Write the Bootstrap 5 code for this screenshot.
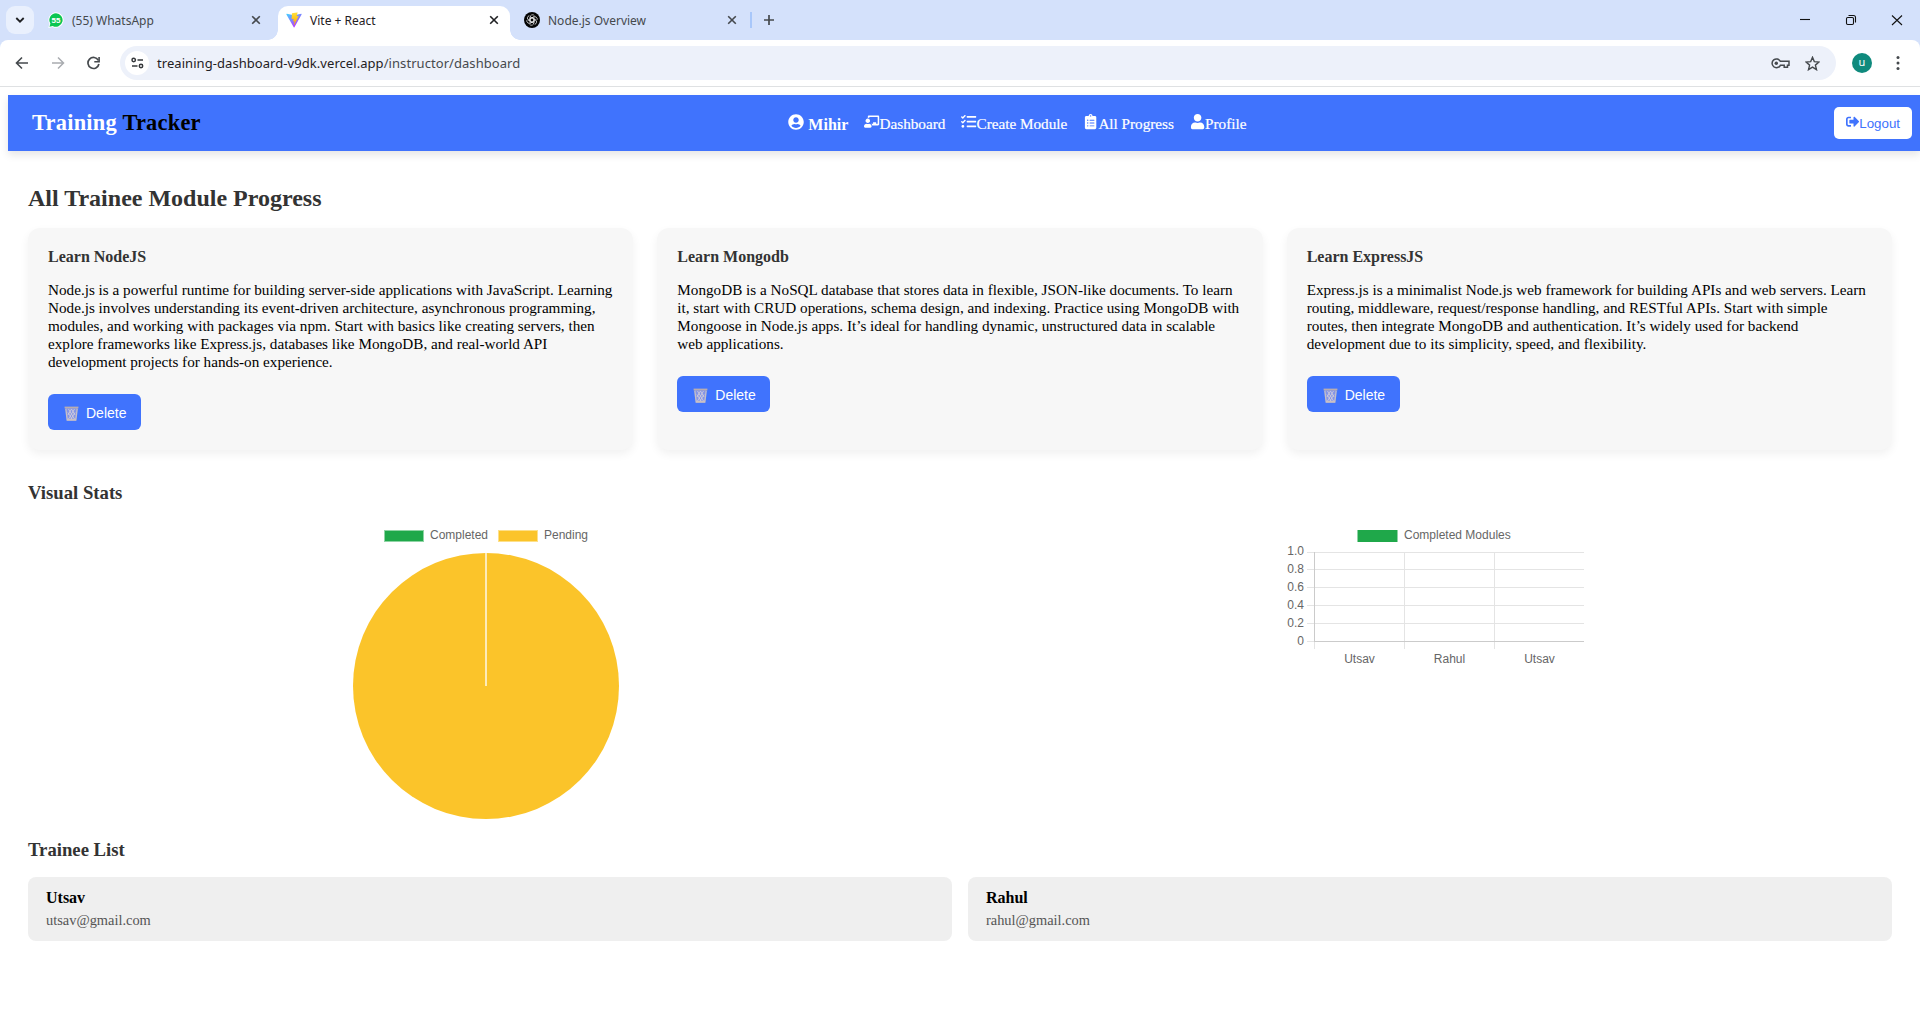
<!DOCTYPE html>
<html lang="en">
<head>
<meta charset="utf-8">
<title>Vite + React</title>
<link href="https://cdn.jsdelivr.net/npm/bootstrap@5.3.0/dist/css/bootstrap.min.css" rel="stylesheet">
<style>
body{margin:0;background:#fff;color:#000;font-family:"Liberation Serif",serif;font-size:16px;line-height:18px;height:1032px;overflow:hidden}
svg{display:block;flex:none}
/* browser frame */
.frame-font{font-family:"Noto Sans","Open Sans",sans-serif}
.strip{height:40px;background:#d4e1fb;padding:6px 0 0 6px}
.tabsearch{width:28px;height:28px;border-radius:9px;background:#e9f0fd}
.tab{height:34px;padding-bottom:6px;font-size:12px;color:#45494d}
.tab span{padding-top:1px}
.tab-a{width:244px;padding-left:14px;padding-right:17px}
.tab-b{width:232px;padding-left:8px;padding-right:11px;background:#fff;border-radius:10px 10px 0 0;color:#1f2023;position:relative}
.tab-b::before,.tab-b::after{content:"";position:absolute;bottom:0;width:10px;height:10px}
.tab-b::before{left:-10px;background:radial-gradient(circle at 0 0,transparent 9.5px,#fff 10px)}
.tab-b::after{right:-10px;background:radial-gradient(circle at 100% 0,transparent 9.5px,#fff 10px)}
.tab-c{width:240px;padding-left:14px;padding-right:13px}
.tabline{width:2px;height:16px;background:#a8c7fa;margin-top:6px}
.plus{margin:8px 0 0 11px}
.toolbar-wrap{background:#d4e1fb}
.toolbar{height:47px;background:#fff;border-bottom:1px solid #dfe1e3;border-radius:8px 8px 0 0;padding:5px 15px 5px 15px}
.fwd{margin-left:22px}
.reload{margin-left:21px}
.omni{height:34px;border-radius:17px;background:#edf1fa;margin-left:19px;width:1716px;padding:0 16px 0 5px;font-size:13px;color:#1f2023}
.url{margin-left:8px;letter-spacing:.06px}
.url span{color:#46494d}
.star{margin-left:15px}
.dots{margin-left:24px}
.site{width:24px;height:24px;border-radius:50%;background:#fff}
.avatar{width:20px;height:20px;border-radius:50%;background:#0f8a7d;color:#fff;font-size:11px;line-height:18px;margin-left:16px}
/* application bar */
.appbar{margin:8px 0 0 8px;height:56px;padding:0 8px 0 24px;background:#4073fd;box-shadow:0 4px 8px rgba(0,0,0,.1);color:#fff}
.brand{font-size:22.4px;font-weight:700;line-height:26px;letter-spacing:.25px}
.brand span{color:#000}
.menu{font-size:15.2px;padding-top:1px}
.menu svg{display:inline;vertical-align:baseline;width:15.2px;height:15.2px}
.menu b svg{width:16px;height:16px}
.menu b{font-size:16px}
.menu a{color:#fff;text-decoration:none;-webkit-text-stroke:.2px #fff}
.logout{height:32px;width:78px;border:0;border-radius:5px;background:#fff;color:#4073fd;font:13.33px/15px "Liberation Sans",sans-serif}
.logout svg{margin-bottom:3px}
/* page */
.page-body{padding:33px 28px 0}
h1{font-size:24px;font-weight:700;line-height:28px;color:#333;margin:0 0 16px}
h2{font-size:18.72px;font-weight:700;line-height:22px;color:#333;margin:0}
.stats-title{margin-top:32px}
.list-title{margin-top:18px}
.modules{gap:24px}
.module{flex:1 1 0;height:222px;background:#f7f7f7;border-radius:12px;padding:20px;box-shadow:0 4px 10px rgba(0,0,0,.06)}
.module h3{font-size:16px;line-height:18px;font-weight:700;color:#333;margin:0 0 15px}
.module p{font-size:15.2px;line-height:18px;margin:0 0 23px;white-space:nowrap}
.del{height:36px;width:93px;border:0;border-radius:6px;background:#4073fd;color:#fff;font:14px/16px "Liberation Sans",sans-serif;padding:2px 0 0 16px}
.del span{margin-left:7px}
.charts{gap:32px;margin-top:17px}
.charts>div{flex:1 1 0}
.charts text{font:12px "Liberation Sans",sans-serif;fill:#666}
.people{gap:16px;margin-top:16px}
.person{flex:1 1 0;height:64px;border-radius:8px;background:#efefef;padding:12px 18px}
.person b{font-size:16px;line-height:18px}
.person span{font-size:14.4px;line-height:17px;color:#555;margin-top:5px}
</style>
</head>
<body>
<svg width="0" height="0" class="position-absolute">
  <symbol id="x" viewBox="0 0 10 10"><path d="M1.2 1.2 8.8 8.8M8.8 1.2 1.2 8.8" stroke="currentColor" stroke-width="1.6" fill="none"/></symbol>
  <symbol id="bin" viewBox="0 0 15 15"><path d="M2 2h11l-1.200 12H3.200z" fill="#8494e6"/><path d="M1.800 2.500 3.200 14h8.600l1.400-11.500" fill="none" stroke="#c6bfc6" stroke-width="1.400"/><path d="m4.500 3 6 10M7.500 3l3.500 6M10.500 3l-6 10M7.500 3 4 9M4 6.500 8 13M11 6.500 7 13" fill="none" stroke="#d7d0da" stroke-width=".8"/><path d="M.6 1.500h13.800" stroke="#b9adb0" stroke-width="1.800"/><path d="M3 13.600h9" stroke="#c9c0c4" stroke-width="1.600"/></symbol>
</svg>

<div class="frame-font">
  <div class="strip d-flex">
    <div class="tabsearch d-flex align-items-center justify-content-center"><svg width="10" height="10" viewBox="0 0 10 10"><path d="m1.300 3 3.700 3.700L8.700 3" fill="none" stroke="#1f2023" stroke-width="1.800"/></svg></div>
    <div class="tab tab-a d-flex align-items-center">
      <svg width="16" height="16" viewBox="0 0 16 16"><path d="M8 .3A7.700 7.700 0 1 1 4.500 14.900L.3 15.900l1.200-4A7.700 7.700 0 0 1 8 .3z" fill="#fff"/><path d="M8 1.300A6.700 6.700 0 1 1 4.700 13.900L1.500 14.700l.9-3.100A6.700 6.700 0 0 1 8 1.300z" fill="#0bc651"/><text x="8" y="10.900" font-family="Liberation Sans" font-size="8" font-weight="700" fill="#fff" text-anchor="middle">55</text></svg>
      <span class="ms-2 flex-grow-1">(55) WhatsApp</span><svg width="10" height="10"><use href="#x"/></svg>
    </div>
    <div class="tab tab-b d-flex align-items-center">
      <svg width="16" height="16" viewBox="0 0 410 404"><defs><linearGradient id="va" x1="0" y1="0" x2=".6" y2="1"><stop stop-color="#41d1ff"/><stop offset="1" stop-color="#bd34fe"/></linearGradient><linearGradient id="vb" x1="0" y1="0" x2="0" y2="1"><stop stop-color="#ffea83"/><stop offset=".1" stop-color="#ffdd35"/><stop offset="1" stop-color="#ffa800"/></linearGradient></defs><path fill="url(#va)" d="M399.600 59.500 215.600 388.500c-3.800 6.800-13.500 6.900-17.400.1L10.600 59.600c-4.200-7.400 2.100-16.400 10.500-14.900l184.200 32.900c1.200.2 2.400.2 3.500 0l180.300-32.800c8.400-1.600 14.700 7.300 10.500 14.700z"/><path fill="url(#vb)" d="M293 1.600 156.800 28.300c-2.200.4-3.900 2.300-4 4.600l-8.400 141.500c-.2 3.300 2.900 5.900 6.100 5.200l37.900-8.800c3.600-.8 6.800 2.300 6 5.900l-11.300 55.200c-.8 3.700 2.700 6.900 6.300 5.800l23.400-7.100c3.600-1.100 7.100 2.100 6.300 5.800l-17.900 86.700c-1.100 5.400 6.100 8.400 9.100 3.700l2-3.100L323 103.400c1.900-3.700-1.300-7.900-5.400-7.100l-39 7.500c-3.700.7-6.800-2.700-5.800-6.300L298.300 9.200c1-3.600-1.700-8.300-5.300-7.600z"/></svg>
      <span class="ms-2 flex-grow-1">Vite + React</span><svg width="10" height="10"><use href="#x"/></svg>
    </div>
    <div class="tab tab-c d-flex align-items-center">
      <svg width="16" height="16" viewBox="-8 -8 16 16"><circle r="8" fill="#050505"/><g fill="none" stroke="#eee" stroke-width=".7"><path id="pet" d="M-1.900 3.300V-2.700a2.500 2.500 0 0 1 4.300-1.800M0-2.200l3.300 1.900"/><use href="#pet" transform="rotate(60)"/><use href="#pet" transform="rotate(120)"/><use href="#pet" transform="rotate(180)"/><use href="#pet" transform="rotate(240)"/><use href="#pet" transform="rotate(300)"/></g></svg>
      <span class="ms-2 flex-grow-1">Node.js Overview</span><svg width="10" height="10"><use href="#x"/></svg>
    </div>
    <div class="tabline"></div>
    <svg class="plus" width="12" height="12" viewBox="0 0 12 12"><path d="M6 1v10M1 6h10" stroke="#45494d" stroke-width="1.700"/></svg>
    <svg class="ms-auto" width="120" height="28" viewBox="0 0 120 28"><g fill="none" stroke="#111" stroke-width="1.100"><path d="M0 13.500h10"/><rect x="46.500" y="11.500" width="7" height="7" rx="1.200"/><path d="M48.500 9.500h5a2 2 0 0 1 2 2v5"/><path d="m92 9.500 10 9.500M102 9.500 92 19"/></g></svg>
  </div>
  <div class="toolbar-wrap"><div class="toolbar d-flex align-items-center">
    <svg width="14" height="14" viewBox="0 0 14 14"><path d="M13 7H2M7 1.500 1.500 7 7 12.500" fill="none" stroke="#45494d" stroke-width="1.600"/></svg>
    <svg class="fwd" width="14" height="14" viewBox="0 0 14 14"><path d="M1 7h11M7 1.500 12.500 7 7 12.500" fill="none" stroke="#a9acb0" stroke-width="1.500"/></svg>
    <svg class="reload" width="15" height="14" viewBox="0 0 15 14"><path d="M12.300 4.300A5.500 5.500 0 1 0 12.900 8" fill="none" stroke="#45494d" stroke-width="1.700"/><path d="M13.100 1v4.800H8.300" fill="none" stroke="#45494d" stroke-width="1.600"/></svg>
    <div class="omni d-flex align-items-center">
      <div class="site d-flex align-items-center justify-content-center"><svg width="13" height="12" viewBox="0 0 13 12"><g fill="none" stroke="#35383b" stroke-width="1.500"><circle cx="2.700" cy="3" r="1.700"/><path d="M6.500 3H12"/><circle cx="10" cy="9" r="1.700"/><path d="M1 9h5.500"/></g></svg></div>
      <div class="flex-grow-1 url">treaining-dashboard-v9dk.vercel.app<span>/instructor/dashboard</span></div>
      <svg width="19" height="12" viewBox="0 0 19 12"><path d="M9.400 4.300H18v4h-1.500v1.900h-3.300V8.300H9.400A4.400 4.400 0 1 1 9.400 4.300z" fill="none" stroke="#45494d" stroke-width="1.500"/><circle cx="5.300" cy="6.200" r="1.700" fill="#45494d"/></svg>
      <svg class="star" width="15" height="15" viewBox="0 0 15 15"><path d="m7.500 1.300 1.800 4.300 4.700.4-3.600 3.100 1.100 4.600-4-2.500-4 2.500 1.100-4.600L1 6l4.700-.4z" fill="none" stroke="#45494d" stroke-width="1.400"/></svg>
    </div>
    <div class="avatar text-center">u</div>
    <svg class="dots" width="4" height="16" viewBox="0 0 4 16"><g fill="#45494d"><circle cx="2" cy="2.500" r="1.500"/><circle cx="2" cy="8" r="1.500"/><circle cx="2" cy="13.500" r="1.500"/></g></svg>
  </div></div>
</div>

<nav class="appbar d-flex align-items-center justify-content-between">
  <div class="brand">Training <span>Tracker</span></div>
  <div class="menu d-flex gap-3 align-items-baseline">
    <b><svg viewBox="0 0 496 512" fill="#fff"><path d="M248 8C111 8 0 119 0 256s111 248 248 248 248-111 248-248S385 8 248 8zm0 96c48.600 0 88 39.400 88 88s-39.400 88-88 88-88-39.400-88-88 39.400-88 88-88zm0 344c-58.700 0-111.300-26.600-146.500-68.200 18.800-35.400 55.600-59.800 98.500-59.800 2.400 0 4.800.4 7.100 1.100 13 4.200 26.600 6.900 40.900 6.900 14.300 0 28-2.700 40.900-6.900 2.300-.7 4.700-1.100 7.100-1.100 42.900 0 79.700 24.400 98.500 59.800C359.300 421.400 306.700 448 248 448z"/></svg> Mihir</b>
    <a><svg viewBox="0 0 640 512" fill="#fff"><path d="M208 352c-2.390 0-4.780.35-7.060 1.090C187.980 357.300 174.350 360 160 360c-14.350 0-27.980-2.700-40.950-6.910-2.280-.74-4.660-1.090-7.050-1.090C49.940 352-.33 402.480 0 464.620.14 490.880 21.730 512 48 512h224c26.270 0 47.860-21.120 48-47.380.33-62.140-49.940-112.620-112-112.620zm-48-32c53.020 0 96-42.980 96-96s-42.980-96-96-96-96 42.980-96 96 42.980 96 96 96zM592 0H208c-26.470 0-48 22.250-48 49.590V96c23.420 0 45.100 6.780 64 17.800V64h352v288h-64v-64H384v64h-76.240c19.100 16.690 33.120 38.730 39.690 64H592c26.470 0 48-22.250 48-49.590V49.590C640 22.250 618.470 0 592 0z"/></svg>Dashboard</a>
    <a><svg viewBox="0 0 512 512" fill="#fff"><path d="M139.610 35.500a12 12 0 0 0-17 0L58.930 98.810l-22.700-22.120a12 12 0 0 0-17 0L3.530 92.410a12 12 0 0 0 0 17l47.590 47.400a12.780 12.780 0 0 0 17.610 0l15.590-15.620L156.520 69a12.090 12.090 0 0 0 .09-17zm0 159.190a12 12 0 0 0-17 0l-63.680 63.720-22.700-22.100a12 12 0 0 0-17 0L3.530 252a12 12 0 0 0 0 17L51 316.500a12.770 12.770 0 0 0 17.600 0l15.700-15.690 72.200-72.220a12 12 0 0 0 .09-16.900zM64 368c-26.490 0-48.590 21.500-48.590 48S37.530 464 64 464a48 48 0 0 0 0-96zm432 16H208a16 16 0 0 0-16 16v32a16 16 0 0 0 16 16h288a16 16 0 0 0 16-16v-32a16 16 0 0 0-16-16zm0-320H208a16 16 0 0 0-16 16v32a16 16 0 0 0 16 16h288a16 16 0 0 0 16-16V80a16 16 0 0 0-16-16zm0 160H208a16 16 0 0 0-16 16v32a16 16 0 0 0 16 16h288a16 16 0 0 0 16-16v-32a16 16 0 0 0-16-16z"/></svg>Create Module</a>
    <a><svg viewBox="0 0 384 512" fill="#fff"><path d="M336 64h-80c0-35.300-28.700-64-64-64s-64 28.700-64 64H48C21.500 64 0 85.500 0 112v352c0 26.500 21.500 48 48 48h288c26.500 0 48-21.500 48-48V112c0-26.500-21.500-48-48-48z"/><g fill="#4073fd"><circle cx="192" cy="64" r="24"/><circle cx="96" cy="208" r="24"/><circle cx="96" cy="304" r="24"/><circle cx="96" cy="400" r="24"/><rect x="160" y="192" width="160" height="32" rx="8"/><rect x="160" y="288" width="160" height="32" rx="8"/><rect x="160" y="384" width="160" height="32" rx="8"/></g></svg>All Progress</a>
    <a><svg viewBox="0 0 448 512" fill="#fff"><path d="M224 256c70.700 0 128-57.300 128-128S294.700 0 224 0 96 57.300 96 128s57.300 128 128 128zm89.600 32h-16.700c-22.200 10.200-46.900 16-72.900 16s-50.600-5.800-72.900-16h-16.700C60.200 288 0 348.200 0 422.400V464c0 26.500 21.500 48 48 48h352c26.500 0 48-21.500 48-48v-41.600c0-74.200-60.200-134.400-134.400-134.400z"/></svg>Profile</a>
  </div>
  <button class="logout d-flex align-items-center justify-content-center p-0"><svg width="13.330" height="13.330" viewBox="0 0 512 512" fill="#4073fd"><path d="M497 273L329 441c-15 15-41 4.500-41-17v-96H152c-13.300 0-24-10.700-24-24v-96c0-13.300 10.700-24 24-24h136V88c0-21.400 25.900-32 41-17l168 168c9.300 9.400 9.300 24.600 0 34zM192 436v-40c0-6.600-5.400-12-12-12H96c-17.700 0-32-14.300-32-32V160c0-17.700 14.300-32 32-32h84c6.600 0 12-5.400 12-12V76c0-6.600-5.400-12-12-12H96c-53 0-96 43-96 96v192c0 53 43 96 96 96h84c6.600 0 12-5.400 12-12z"/></svg>Logout</button>
</nav>

<main class="page-body">
  <h1>All Trainee Module Progress</h1>
  <div class="modules d-flex">
    <section class="module">
      <h3>Learn NodeJS</h3>
      <p>Node.js is a powerful runtime for building server-side applications with JavaScript. Learning<br>Node.js involves understanding its event-driven architecture, asynchronous programming,<br>modules, and working with packages via npm. Start with basics like creating servers, then<br>explore frameworks like Express.js, databases like MongoDB, and real-world API<br>development projects for hands-on experience.</p>
      <button class="del d-flex align-items-center"><svg width="15" height="15"><use href="#bin"/></svg><span>Delete</span></button>
    </section>
    <section class="module">
      <h3>Learn Mongodb</h3>
      <p>MongoDB is a NoSQL database that stores data in flexible, JSON-like documents. To learn<br>it, start with CRUD operations, schema design, and indexing. Practice using MongoDB with<br>Mongoose in Node.js apps. It’s ideal for handling dynamic, unstructured data in scalable<br>web applications.</p>
      <button class="del d-flex align-items-center"><svg width="15" height="15"><use href="#bin"/></svg><span>Delete</span></button>
    </section>
    <section class="module">
      <h3>Learn ExpressJS</h3>
      <p>Express.js is a minimalist Node.js web framework for building APIs and web servers. Learn<br>routing, middleware, request/response handling, and RESTful APIs. Start with simple<br>routes, then integrate MongoDB and authentication. It’s widely used for backend<br>development due to its simplicity, speed, and flexibility.</p>
      <button class="del d-flex align-items-center"><svg width="15" height="15"><use href="#bin"/></svg><span>Delete</span></button>
    </section>
  </div>

  <h2 class="stats-title">Visual Stats</h2>
  <div class="charts d-flex">
    <div class="d-flex justify-content-center">
      <svg width="300" height="300" viewBox="336 521 300 300">
        <rect x="384.500" y="530.500" width="39" height="11" fill="#1fa84a" stroke="#8fd4a4"/><text x="430" y="539">Completed</text>
        <rect x="498.500" y="530.500" width="39" height="11" fill="#fbc42a" stroke="#fde08a"/><text x="544" y="539">Pending</text>
        <circle cx="486" cy="686" r="133" fill="#fbc42a"/><path d="M486 553v133" stroke="#fdebb8" stroke-width="2"/>
      </svg>
    </div>
    <div class="d-flex justify-content-center">
      <svg width="300" height="150" viewBox="1284 521 300 150">
        <rect x="1357.500" y="530" width="40" height="12" fill="#1fa84a"/><text x="1404" y="539">Completed Modules</text>
        <path d="M1307 552.500h277M1307 569.500h277M1307 587.500h277M1307 605.500h277M1307 623.500h277M1307 641.500h277M1314.500 552v97M1404.500 552v97M1494.500 552v97" stroke="#e4e4e4" fill="none"/>
        <path d="M1314.500 552v90M1314 641.500h270" stroke="#cbcbcb" fill="none"/>
        <g text-anchor="end"><text x="1304" y="555">1.0</text><text x="1304" y="573">0.8</text><text x="1304" y="591">0.6</text><text x="1304" y="609">0.4</text><text x="1304" y="627">0.2</text><text x="1304" y="645">0</text></g>
        <g text-anchor="middle"><text x="1359.500" y="663">Utsav</text><text x="1449.500" y="663">Rahul</text><text x="1539.500" y="663">Utsav</text></g>
      </svg>
    </div>
  </div>

  <h2 class="list-title">Trainee List</h2>
  <div class="people d-flex">
    <div class="person d-flex flex-column"><b>Utsav</b><span>utsav@gmail.com</span></div>
    <div class="person d-flex flex-column"><b>Rahul</b><span>rahul@gmail.com</span></div>
  </div>
</main>
<script src="https://cdn.jsdelivr.net/npm/bootstrap@5.3.0/dist/js/bootstrap.bundle.min.js"></script>
</body>
</html>
